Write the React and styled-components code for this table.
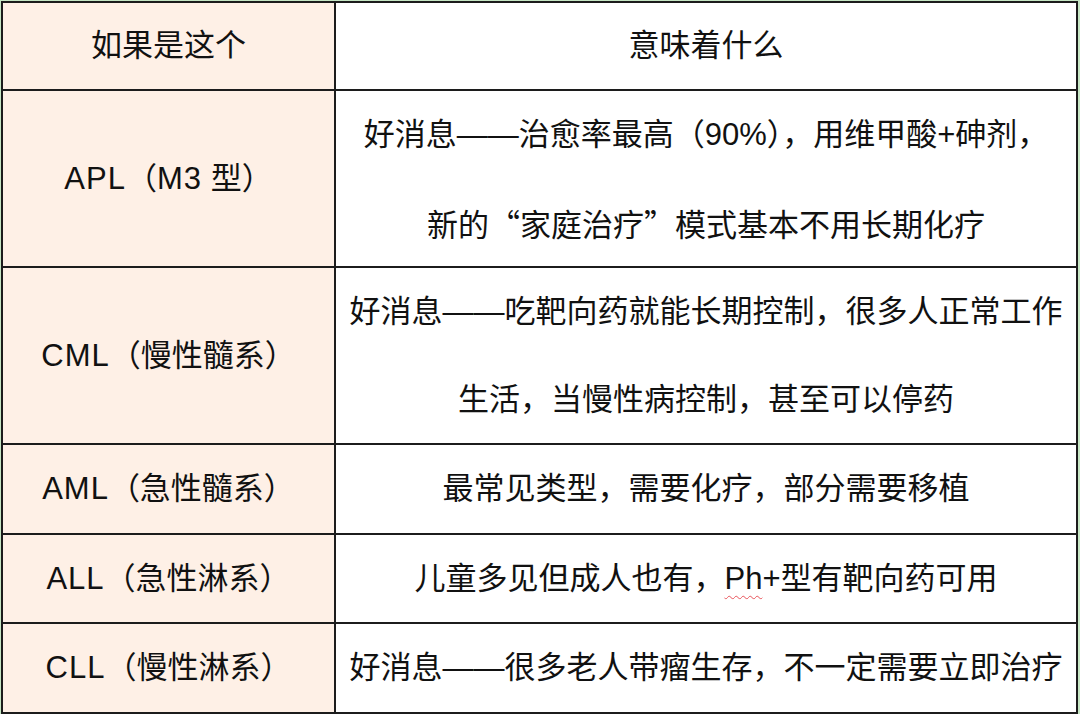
import React from "react";
import styled, { createGlobalStyle } from "styled-components";

const Global = createGlobalStyle`
  html, body { margin: 0; padding: 0; background: #c6e6c4; }
  body { width: 1080px; height: 714px; overflow: hidden; }
`;

const Frame = styled.div`
  padding: 1px 2px 0 1px;
`;

const Table = styled.div`
  display: grid;
  grid-template-columns: 331px 1fr;
  grid-template-rows: 86px 175px 175px 88px 87px 88px;
  gap: 2px;
  padding: 2px;
  background: #1c1c1c;
  font-family: "Liberation Sans", "Noto Sans CJK SC", sans-serif;
  font-size: 31px;
  color: #111;
`;

const Cell = styled.div`
  display: flex;
  flex-direction: column;
  align-items: center;
  justify-content: center;
  background: ${(p) => (p.$label ? "#fef0e6" : "#ffffff")};
  text-align: center;
  white-space: nowrap;
`;

const Line = styled.div`
  line-height: 88px;
  height: ${(p) => (p.$tall ? "88px" : "auto")};
`;

const Latin = styled.span`
  letter-spacing: 1px;
`;

const Cjk = styled.span`
  font-family: "Noto Sans CJK SC", sans-serif;
`;

const Spell = styled.span`
  text-decoration: underline wavy #e8545a;
  text-decoration-thickness: 1px;
  text-underline-offset: 6px;
`;

const rows = [
  { label: <><Latin>APL</Latin>（<Latin>M3</Latin> 型）</>, lines: ["好消息——治愈率最高（90%），用维甲酸+砷剂，", <>新的<Cjk>“</Cjk>家庭治疗<Cjk>”</Cjk>模式基本不用长期化疗</>] },
  { label: <><Latin>CML</Latin>（慢性髓系）</>, lines: ["好消息——吃靶向药就能长期控制，很多人正常工作", "生活，当慢性病控制，甚至可以停药"] },
  { label: <><Latin>AML</Latin>（急性髓系）</>, lines: ["最常见类型，需要化疗，部分需要移植"] },
  { label: <><Latin>ALL</Latin>（急性淋系）</>, lines: [<>儿童多见但成人也有，<Spell>Ph</Spell>+型有靶向药可用</>] },
  { label: <><Latin>CLL</Latin>（慢性淋系）</>, lines: ["好消息——很多老人带瘤生存，不一定需要立即治疗"] },
];

export default function App() {
  return (
    <>
      <Global />
      <Frame>
        <Table>
          <Cell $label><Line>如果是这个</Line></Cell>
          <Cell><Line>意味着什么</Line></Cell>
          {rows.map((r, i) => (
            <React.Fragment key={i}>
              <Cell $label><Line>{r.label}</Line></Cell>
              <Cell>
                {r.lines.map((l, j) => (
                  <Line key={j} $tall={r.lines.length > 1}>{l}</Line>
                ))}
              </Cell>
            </React.Fragment>
          ))}
        </Table>
      </Frame>
    </>
  );
}
